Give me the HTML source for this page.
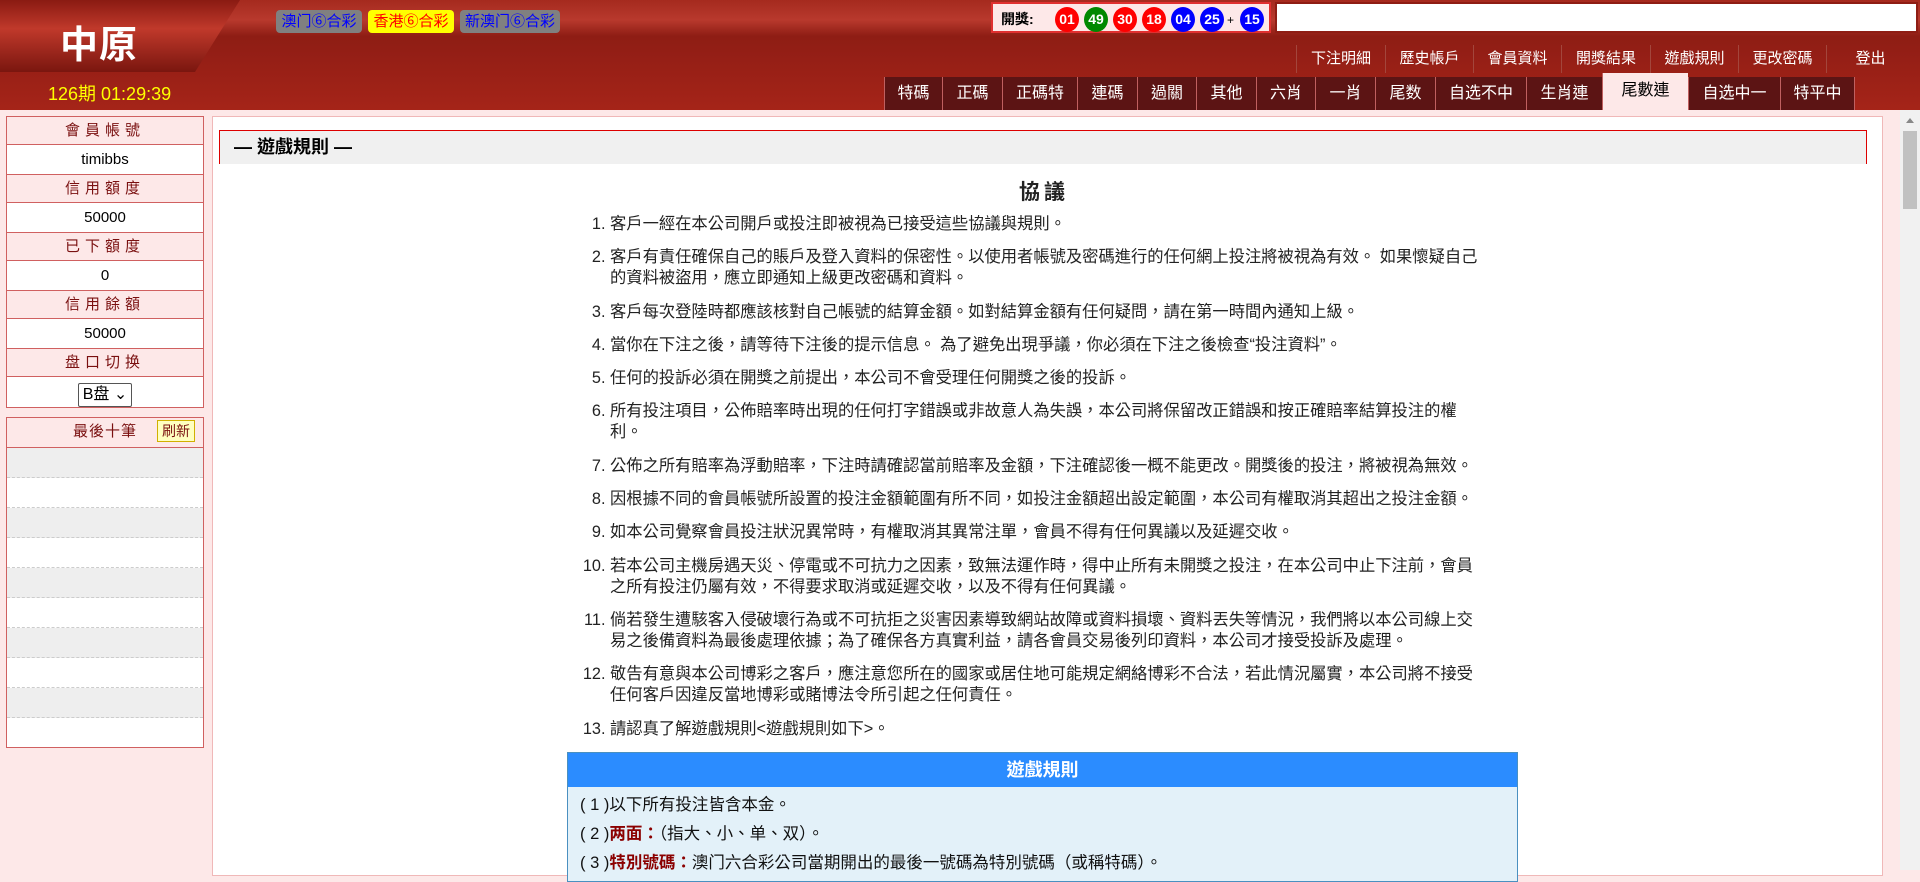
<!DOCTYPE html>
<html><head><meta charset="utf-8">
<style>
*{margin:0;padding:0;box-sizing:border-box}
body{width:1920px;height:870px;overflow:hidden;background:#fde8e8;font-family:"Liberation Sans","Noto Sans CJK TC",sans-serif;position:relative}
.abs{position:absolute}
#hdr{left:0;top:0;width:1920px;height:110px;background:linear-gradient(#a52a1e 0,#b8392d 20px,#8e1d14 36px,#961f16 60px,#a52418 110px)}
#logo{left:0;top:0;width:245px;height:72px;background:linear-gradient(180deg,#8a1a12,#c0392b 40%,#7a160f);clip-path:polygon(0 0,240px 0,195px 72px,0 72px)}
#logo span{position:absolute;left:60px;top:14px;font-size:38px;font-weight:bold;color:#fff;letter-spacing:1px}
.lb{top:10px;height:23px;border-radius:4px;background:#808080;color:#00f;font-size:15px;line-height:23px;text-align:center}
#period{left:48px;top:80px;color:#ff0;font-size:18px}
#draw{left:991px;top:2px;width:280px;height:31px;border:2px solid #e03030;background:#fde8e8}
#draw b{position:absolute;left:8px;top:5px;font-size:14px;font-weight:bold}
.ball{position:absolute;top:3px;width:24px;height:25px;border-radius:50%;color:#fff;font-weight:bold;font-size:14px;line-height:25px;text-align:center}
#inp{left:1275px;top:2px;width:643px;height:31px;border:2px solid #8e1d14;background:#fff}
.tm{top:45px;height:28px;color:#fff;font-size:15px;line-height:28px;text-align:center;border-left:1px solid #a3463c}
.tab{top:77px;height:33px;background:#5c1414;color:#fff;font-size:16px;line-height:33px;text-align:center;border-left:1px solid #c06060}
.tab.act{background:#fde8e8;color:#000;top:73px;height:37px;line-height:35px}
.side{left:6px;width:198px;border:1px solid #d06060;background:#fff}
.side div{height:30px;line-height:29px;text-align:center;font-size:15px;border-bottom:1px solid #d06060}
.side .h{height:28px;line-height:27px;background:#fde8e8;color:#7a1010;letter-spacing:5px}
#panel{left:212px;top:116px;width:1671px;height:760px;background:#fff;border:1px solid #f0b8b8}
#ttl{left:219px;top:130px;width:1648px;height:34px;border:1px solid #d00;border-bottom:none;background:#f0f0f0;font-size:18px;font-weight:bold;line-height:32px;padding-left:14px}
#xy{left:0;top:176px;width:2088px;text-align:center;font-size:21px;font-weight:bold;letter-spacing:4px;color:#222}
ol{position:absolute;left:610px;top:214px;width:874px;font-size:16.3px;line-height:21px;color:#222}
ol li{margin-bottom:12.3px}
#tbl{left:567px;top:752px;width:951px;height:130px;border:1px solid #4a90c0;background:#e3f1f9}
#tbl .th{height:34px;background:#2b8cff;color:#fff;font-weight:bold;font-size:18px;line-height:34px;text-align:center;margin-bottom:4px}
#tbl p{font-size:16.5px;height:29px;line-height:29px;padding-left:12px;color:#111}
#tbl em{font-style:normal;color:#8b0000;font-weight:bold}
#sb{left:1900px;top:110px;width:20px;height:760px;background:#f1f1f1}
</style></head><body>
<div id="hdr" class="abs"></div>
<div id="logo" class="abs"><span>中原</span></div>
<div class="abs lb" style="left:276px;width:86px">澳门⑥合彩</div>
<div class="abs lb" style="left:368px;width:86px;background:#ff0;color:#f00">香港⑥合彩</div>
<div class="abs lb" style="left:460px;width:100px">新澳门⑥合彩</div>
<div id="period" class="abs">126期 01:29:39</div>
<div id="draw" class="abs"><b>開獎:</b>
<span class="ball" style="left:62px;background:#f00">01</span>
<span class="ball" style="left:91px;background:#080">49</span>
<span class="ball" style="left:120px;background:#f00">30</span>
<span class="ball" style="left:149px;background:#f00">18</span>
<span class="ball" style="left:178px;background:#00f">04</span>
<span class="ball" style="left:207px;background:#00f">25</span>
<span style="position:absolute;left:234px;top:9px;font-size:12px">+</span>
<span class="ball" style="left:247px;background:#00f">15</span></div>
<div id="inp" class="abs"></div>
<div class="abs tm" style="left:1296px;width:89px">下注明細</div>
<div class="abs tm" style="left:1385px;width:88px">歷史帳戶</div>
<div class="abs tm" style="left:1473px;width:88px">會員資料</div>
<div class="abs tm" style="left:1561px;width:89px">開獎結果</div>
<div class="abs tm" style="left:1650px;width:88px">遊戲規則</div>
<div class="abs tm" style="left:1738px;width:88px">更改密碼</div>
<div class="abs tm" style="left:1826px;width:88px">登出</div>
<div class="abs tab" style="left:884px;width:58px">特碼</div>
<div class="abs tab" style="left:942px;width:60px">正碼</div>
<div class="abs tab" style="left:1002px;width:75px">正碼特</div>
<div class="abs tab" style="left:1077px;width:60px">連碼</div>
<div class="abs tab" style="left:1137px;width:59px">過關</div>
<div class="abs tab" style="left:1196px;width:60px">其他</div>
<div class="abs tab" style="left:1256px;width:59px">六肖</div>
<div class="abs tab" style="left:1315px;width:60px">一肖</div>
<div class="abs tab" style="left:1375px;width:60px">尾数</div>
<div class="abs tab" style="left:1435px;width:91px">自选不中</div>
<div class="abs tab" style="left:1526px;width:76px">生肖連</div>
<div class="abs tab act" style="left:1602px;width:86px">尾數連</div>
<div class="abs tab" style="left:1688px;width:92px">自选中一</div>
<div class="abs tab" style="left:1780px;width:75px;border-right:1px solid #c06060">特平中</div>

<div class="abs side" style="top:116px">
<div class="h">會員帳號</div><div>timibbs</div>
<div class="h">信用額度</div><div>50000</div>
<div class="h">已下額度</div><div>0</div>
<div class="h">信用餘額</div><div>50000</div>
<div class="h">盘口切换</div>
<div style="border:none;padding-top:3px"><span style="display:inline-block;border:1px solid #555;border-radius:2px;height:24px;line-height:22px;padding:0 4px;font-size:16px;background:#fff">B盘 ⌄</span></div>
</div>
<div class="abs side" style="top:417px;height:331px;background:#fff">
<div class="h" style="letter-spacing:1px;position:relative;height:30px">最後十筆<span style="position:absolute;right:8px;top:2px;background:#ffffc0;border:1px solid #d0b000;height:22px;line-height:20px;padding:0 4px;letter-spacing:0;font-size:14px;color:#7a1010">刷新</span></div>
<div style="background:#eee;border-bottom:1px dashed #ccc"></div><div style="border-bottom:1px dashed #ccc"></div>
<div style="background:#eee;border-bottom:1px dashed #ccc"></div><div style="border-bottom:1px dashed #ccc"></div>
<div style="background:#eee;border-bottom:1px dashed #ccc"></div><div style="border-bottom:1px dashed #ccc"></div>
<div style="background:#eee;border-bottom:1px dashed #ccc"></div><div style="border-bottom:1px dashed #ccc"></div>
<div style="background:#eee;border-bottom:1px dashed #ccc"></div><div style="border:none"></div>
</div>

<div id="panel" class="abs"></div>
<div id="ttl" class="abs">— 遊戲規則 —</div>
<div id="xy" class="abs">協議</div>
<ol>
<li>客戶一經在本公司開戶或投注即被視為已接受這些協議與規則。</li>
<li>客戶有責任確保自己的賬戶及登入資料的保密性。以使用者帳號及密碼進行的任何網上投注將被視為有效。 如果懷疑自己的資料被盜用，應立即通知上級更改密碼和資料。</li>
<li>客戶每次登陸時都應該核對自己帳號的結算金額。如對結算金額有任何疑問，請在第一時間內通知上級。</li>
<li>當你在下注之後，請等待下注後的提示信息。 為了避免出現爭議，你必須在下注之後檢查“投注資料”。</li>
<li>任何的投訴必須在開獎之前提出，本公司不會受理任何開獎之後的投訴。</li>
<li>所有投注項目，公佈賠率時出現的任何打字錯誤或非故意人為失誤，本公司將保留改正錯誤和按正確賠率結算投注的權利。</li>
<li>公佈之所有賠率為浮動賠率，下注時請確認當前賠率及金額，下注確認後一概不能更改。開獎後的投注，將被視為無效。</li>
<li>因根據不同的會員帳號所設置的投注金額範圍有所不同，如投注金額超出設定範圍，本公司有權取消其超出之投注金額。</li>
<li>如本公司覺察會員投注狀況異常時，有權取消其異常注單，會員不得有任何異議以及延遲交收。</li>
<li>若本公司主機房遇天災、停電或不可抗力之因素，致無法運作時，得中止所有未開獎之投注，在本公司中止下注前，會員之所有投注仍屬有效，不得要求取消或延遲交收，以及不得有任何異議。</li>
<li>倘若發生遭駭客入侵破壞行為或不可抗拒之災害因素導致網站故障或資料損壞、資料丟失等情況，我們將以本公司線上交易之後備資料為最後處理依據；為了確保各方真實利益，請各會員交易後列印資料，本公司才接受投訴及處理。</li>
<li>敬告有意與本公司博彩之客戶，應注意您所在的國家或居住地可能規定網絡博彩不合法，若此情況屬實，本公司將不接受任何客戶因違反當地博彩或賭博法令所引起之任何責任。</li>
<li>請認真了解遊戲規則&lt;遊戲規則如下&gt;。</li>
</ol>
<div id="tbl" class="abs"><div class="th">遊戲規則</div>
<p>( 1 )以下所有投注皆含本金。</p>
<p>( 2 )<em>两面：</em>（指大、小、单、双）。</p>
<p>( 3 )<em>特別號碼：</em>澳门六合彩公司當期開出的最後一號碼為特別號碼（或稱特碼）。</p>
</div>
<div id="sb" class="abs"><div style="position:absolute;left:6px;top:8px;width:0;height:0;border:4px solid transparent;border-bottom:5px solid #888;border-top:none"></div><div style="position:absolute;left:3px;top:21px;width:14px;height:78px;background:#c1c1c1"></div></div>
</body></html>
